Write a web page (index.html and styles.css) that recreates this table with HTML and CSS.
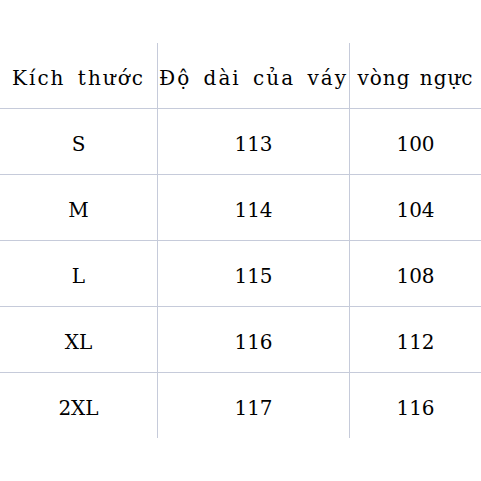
FILE: index.html
```html
<!DOCTYPE html>
<html>
<head>
<meta charset="utf-8">
<link rel="stylesheet" href="styles.css">
</head>
<body>
<div class="sheet">
  <div class="cell head c1">Kích thước</div>
  <div class="cell head c2">Độ dài của váy</div>
  <div class="cell head c3 tight">vòng ngực</div>

  <div class="cell c1">S</div>
  <div class="cell c2">113</div>
  <div class="cell c3">100</div>

  <div class="cell c1">M</div>
  <div class="cell c2">114</div>
  <div class="cell c3">104</div>

  <div class="cell c1">L</div>
  <div class="cell c2">115</div>
  <div class="cell c3">108</div>

  <div class="cell c1">XL</div>
  <div class="cell c2">116</div>
  <div class="cell c3">112</div>

  <div class="cell c1">2XL</div>
  <div class="cell c2">117</div>
  <div class="cell c3">116</div>
</div>
</body>
</html>
```

FILE: styles.css
```css
html, body {
  margin: 0;
  padding: 0;
  background: #ffffff;
}
body {
  width: 481px;
  height: 481px;
  overflow: hidden;
}
.sheet {
  margin-top: 43px;
  display: grid;
  grid-template-columns: 157px 192px 132px;
  grid-template-rows: 65px repeat(5, 66px);
  font-family: "DejaVu Serif", serif;
  font-size: 20px;
  color: #000000;
}
.cell {
  display: flex;
  align-items: center;
  justify-content: center;
  white-space: nowrap;
  border-top: 1px solid #c6cbda;
  box-sizing: border-box;
  padding-top: 5px;
}
.head {
  border-top: none;
  padding-top: 4px;
  letter-spacing: 2px;
  word-spacing: 4px;
}
.head.tight {
  letter-spacing: 1px;
  word-spacing: 2px;
}
.c2, .c3 {
  border-left: 1px solid #c6cbda;
}
```
